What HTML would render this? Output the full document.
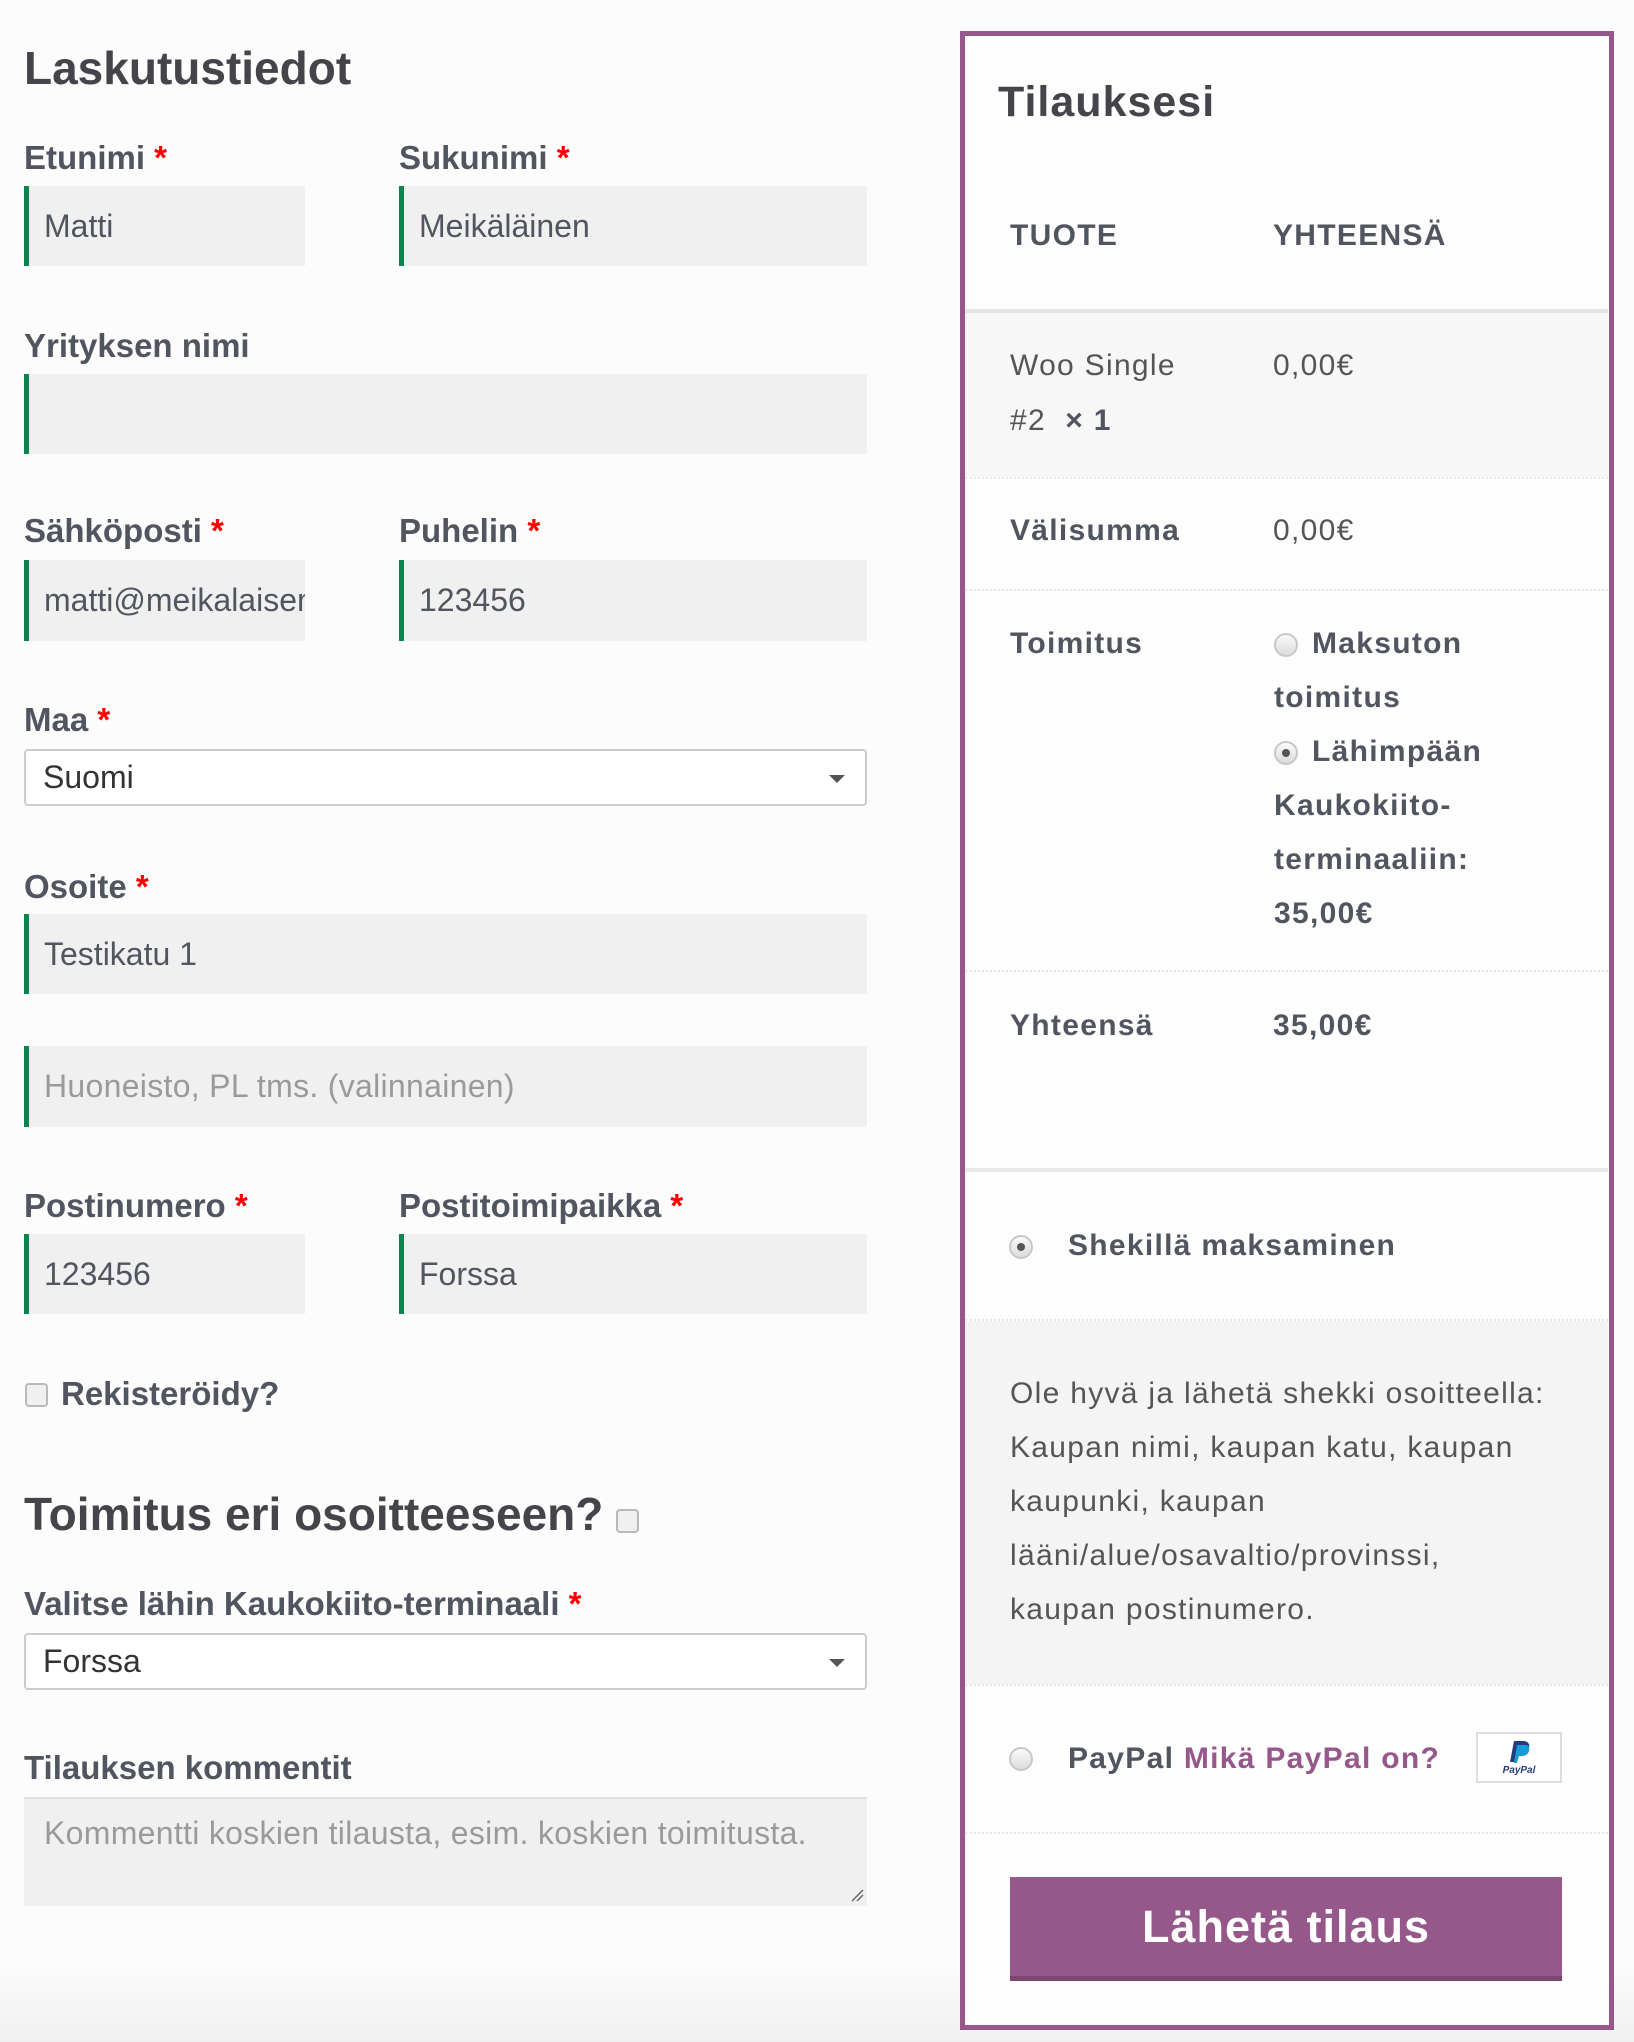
<!DOCTYPE html>
<html><head><meta charset="utf-8"><style>
*{margin:0;padding:0;box-sizing:border-box}
html,body{width:1634px;height:2042px;overflow:hidden}
body{background:linear-gradient(#fcfcfc 0,#fcfcfc 1960px,#f0f0f0 2042px);font-family:"Liberation Sans",sans-serif;position:relative;color:#515151}
.a{position:absolute;white-space:nowrap}
.h{font-weight:bold;font-size:46px;color:#43454b;line-height:54px;letter-spacing:0}
.l{font-weight:bold;font-size:33px;color:#515560;line-height:54px;letter-spacing:0}
.l b{color:#f00;font-weight:bold}
.in{position:absolute;background:#f0f0f0;border-left:5px solid #0f834d;font-size:32px;color:#515560;padding-left:15px;display:flex;align-items:center;letter-spacing:0;overflow:hidden;white-space:nowrap}
.ph{color:#9a9a9a;letter-spacing:0.3px}
.sel{position:absolute;background:#fff;border:2px solid #ccc;border-radius:4px;font-size:32px;color:#333;padding-left:17px;display:flex;align-items:center}
.sel:after{content:"";position:absolute;right:20px;top:24px;border-left:8px solid transparent;border-right:8px solid transparent;border-top:8px solid #555}
.cb{position:absolute;width:23px;height:24px;border:2px solid #b9b9b9;border-radius:4px;background:#f0f0f0}
.r{font-size:30px;line-height:54px;letter-spacing:1.3px;color:#555}
.rb{font-weight:bold;color:#515560}
.dot{position:absolute;left:965px;width:643px;border-top:2px dotted #e6e6e6;height:0}
.rad{position:absolute;width:24px;height:24px;border-radius:50%;border:2px solid #c8c8c8;background:linear-gradient(#fafafa,#dcdcdc)}
.rad.on:after{content:"";position:absolute;left:6px;top:6px;width:8px;height:8px;border-radius:50%;background:#555}
</style></head><body>
<div class="a h" style="left:24px;top:41px">Laskutustiedot</div>

<div class="a l" style="left:24px;top:131px">Etunimi <b>*</b></div>
<div class="a l" style="left:399px;top:131px">Sukunimi <b>*</b></div>
<div class="in" style="left:24px;top:186px;width:281px;height:80px">Matti</div>
<div class="in" style="left:399px;top:186px;width:468px;height:80px">Meikäläinen</div>

<div class="a l" style="left:24px;top:319px">Yrityksen nimi</div>
<div class="in" style="left:24px;top:374px;width:843px;height:80px"></div>

<div class="a l" style="left:24px;top:504px">Sähköposti <b>*</b></div>
<div class="a l" style="left:399px;top:504px">Puhelin <b>*</b></div>
<div class="in" style="left:24px;top:560px;width:281px;height:81px">matti@meikalaisen</div>
<div class="in" style="left:399px;top:560px;width:468px;height:81px">123456</div>

<div class="a l" style="left:24px;top:693px">Maa <b>*</b></div>
<div class="sel" style="left:24px;top:749px;width:843px;height:57px">Suomi</div>

<div class="a l" style="left:24px;top:860px">Osoite <b>*</b></div>
<div class="in" style="left:24px;top:914px;width:843px;height:80px">Testikatu 1</div>
<div class="in ph" style="left:24px;top:1046px;width:843px;height:81px">Huoneisto, PL tms. (valinnainen)</div>

<div class="a l" style="left:24px;top:1179px">Postinumero <b>*</b></div>
<div class="a l" style="left:399px;top:1179px">Postitoimipaikka <b>*</b></div>
<div class="in" style="left:24px;top:1234px;width:281px;height:80px">123456</div>
<div class="in" style="left:399px;top:1234px;width:468px;height:80px">Forssa</div>

<div class="cb" style="left:25px;top:1383px"></div>
<div class="a l" style="left:61px;top:1367px">Rekisteröidy?</div>

<div class="a h" style="left:24px;top:1487px">Toimitus eri osoitteeseen?</div>
<div class="cb" style="left:616px;top:1509px"></div>

<div class="a l" style="left:24px;top:1577px">Valitse lähin Kaukokiito-terminaali <b>*</b></div>
<div class="sel" style="left:24px;top:1633px;width:843px;height:57px">Forssa</div>

<div class="a l" style="left:24px;top:1741px">Tilauksen kommentit</div>
<div class="in ph" style="left:24px;top:1797px;width:843px;height:109px;border-left:none;align-items:flex-start;padding-top:16px;padding-left:20px;border-top:2px solid #e2e2e2">Kommentti koskien tilausta, esim. koskien toimitusta.</div>
<svg class="a" style="left:850px;top:1888px" width="14" height="14"><path d="M2 13L13 2M7 13L13 7" stroke="#666" stroke-width="1.5"/></svg>

<!-- right panel -->
<div class="a" style="left:960px;top:31px;width:654px;height:1999px;border:5px solid #96588a;background:#fdfdfd"></div>
<div class="a" style="left:965px;top:309px;width:643px;height:168px;background:#f7f7f7;border-top:4px solid #e5e5e5"></div>
<div class="a" style="left:965px;top:1321px;width:643px;height:363px;background:#f4f4f4"></div>
<div class="a" style="left:965px;top:1168px;width:643px;height:4px;background:#e8e8e8"></div>
<div class="dot" style="top:477px"></div>
<div class="dot" style="top:589px"></div>
<div class="dot" style="top:970px"></div>
<div class="dot" style="top:1319px"></div>
<div class="dot" style="top:1684px"></div>
<div class="dot" style="top:1832px"></div>

<div class="a h" style="left:998px;top:75px;font-size:43px;letter-spacing:1px">Tilauksesi</div>
<div class="a r rb" style="left:1010px;top:209px">TUOTE</div>
<div class="a r rb" style="left:1273px;top:209px">YHTEENSÄ</div>
<div class="a r" style="left:1010px;top:339px">Woo Single</div>
<div class="a r" style="left:1010px;top:394px">#2 &nbsp;<b class="rb">× 1</b></div>
<div class="a r" style="left:1273px;top:339px">0,00€</div>
<div class="a r rb" style="left:1010px;top:504px">Välisumma</div>
<div class="a r" style="left:1273px;top:504px">0,00€</div>
<div class="a r rb" style="left:1010px;top:617px">Toimitus</div>
<div class="rad" style="left:1274px;top:633px"></div>
<div class="a r rb" style="left:1312px;top:617px">Maksuton</div>
<div class="a r rb" style="left:1274px;top:671px">toimitus</div>
<div class="rad on" style="left:1274px;top:741px"></div>
<div class="a r rb" style="left:1312px;top:725px">Lähimpään</div>
<div class="a r rb" style="left:1274px;top:779px">Kaukokiito-</div>
<div class="a r rb" style="left:1274px;top:833px">terminaaliin:</div>
<div class="a r rb" style="left:1274px;top:887px">35,00€</div>
<div class="a r rb" style="left:1010px;top:999px">Yhteensä</div>
<div class="a r rb" style="left:1273px;top:999px">35,00€</div>

<div class="rad on" style="left:1009px;top:1235px"></div>
<div class="a r rb" style="left:1068px;top:1219px">Shekillä maksaminen</div>
<div class="a r" style="left:1010px;top:1367px">Ole hyvä ja lähetä shekki osoitteella:</div>
<div class="a r" style="left:1010px;top:1421px">Kaupan nimi, kaupan katu, kaupan</div>
<div class="a r" style="left:1010px;top:1475px">kaupunki, kaupan</div>
<div class="a r" style="left:1010px;top:1529px">lääni/alue/osavaltio/provinssi,</div>
<div class="a r" style="left:1010px;top:1583px">kaupan postinumero.</div>

<div class="rad" style="left:1009px;top:1747px"></div>
<div class="a r rb" style="left:1068px;top:1732px">PayPal <span style="color:#96588a">Mikä PayPal on?</span></div>
<div class="a" style="left:1476px;top:1732px;width:86px;height:51px;border:2px solid #ddd;background:#fff">
<svg width="82" height="47" viewBox="0 0 82 47"><path d="M36 7h9c5 0 7 3 6 7-1 4-4 6-8 6h-4l-2 8h-5z" fill="#253b80"/><path d="M39 11h8c4 0 5 3 4 6-1 3-3 5-7 5h-3l-2 7h-3z" fill="#179bd7"/><text x="41" y="39" font-family="Liberation Sans" font-size="10" font-style="italic" font-weight="bold" fill="#253b80" text-anchor="middle">PayPal</text></svg></div>

<div class="a" style="left:1010px;top:1877px;width:552px;height:104px;background:#96588a;border-bottom:5px solid #7b4772;color:#fff;font-weight:bold;font-size:45px;letter-spacing:1px;display:flex;align-items:center;justify-content:center">Lähetä tilaus</div>
</body></html>
